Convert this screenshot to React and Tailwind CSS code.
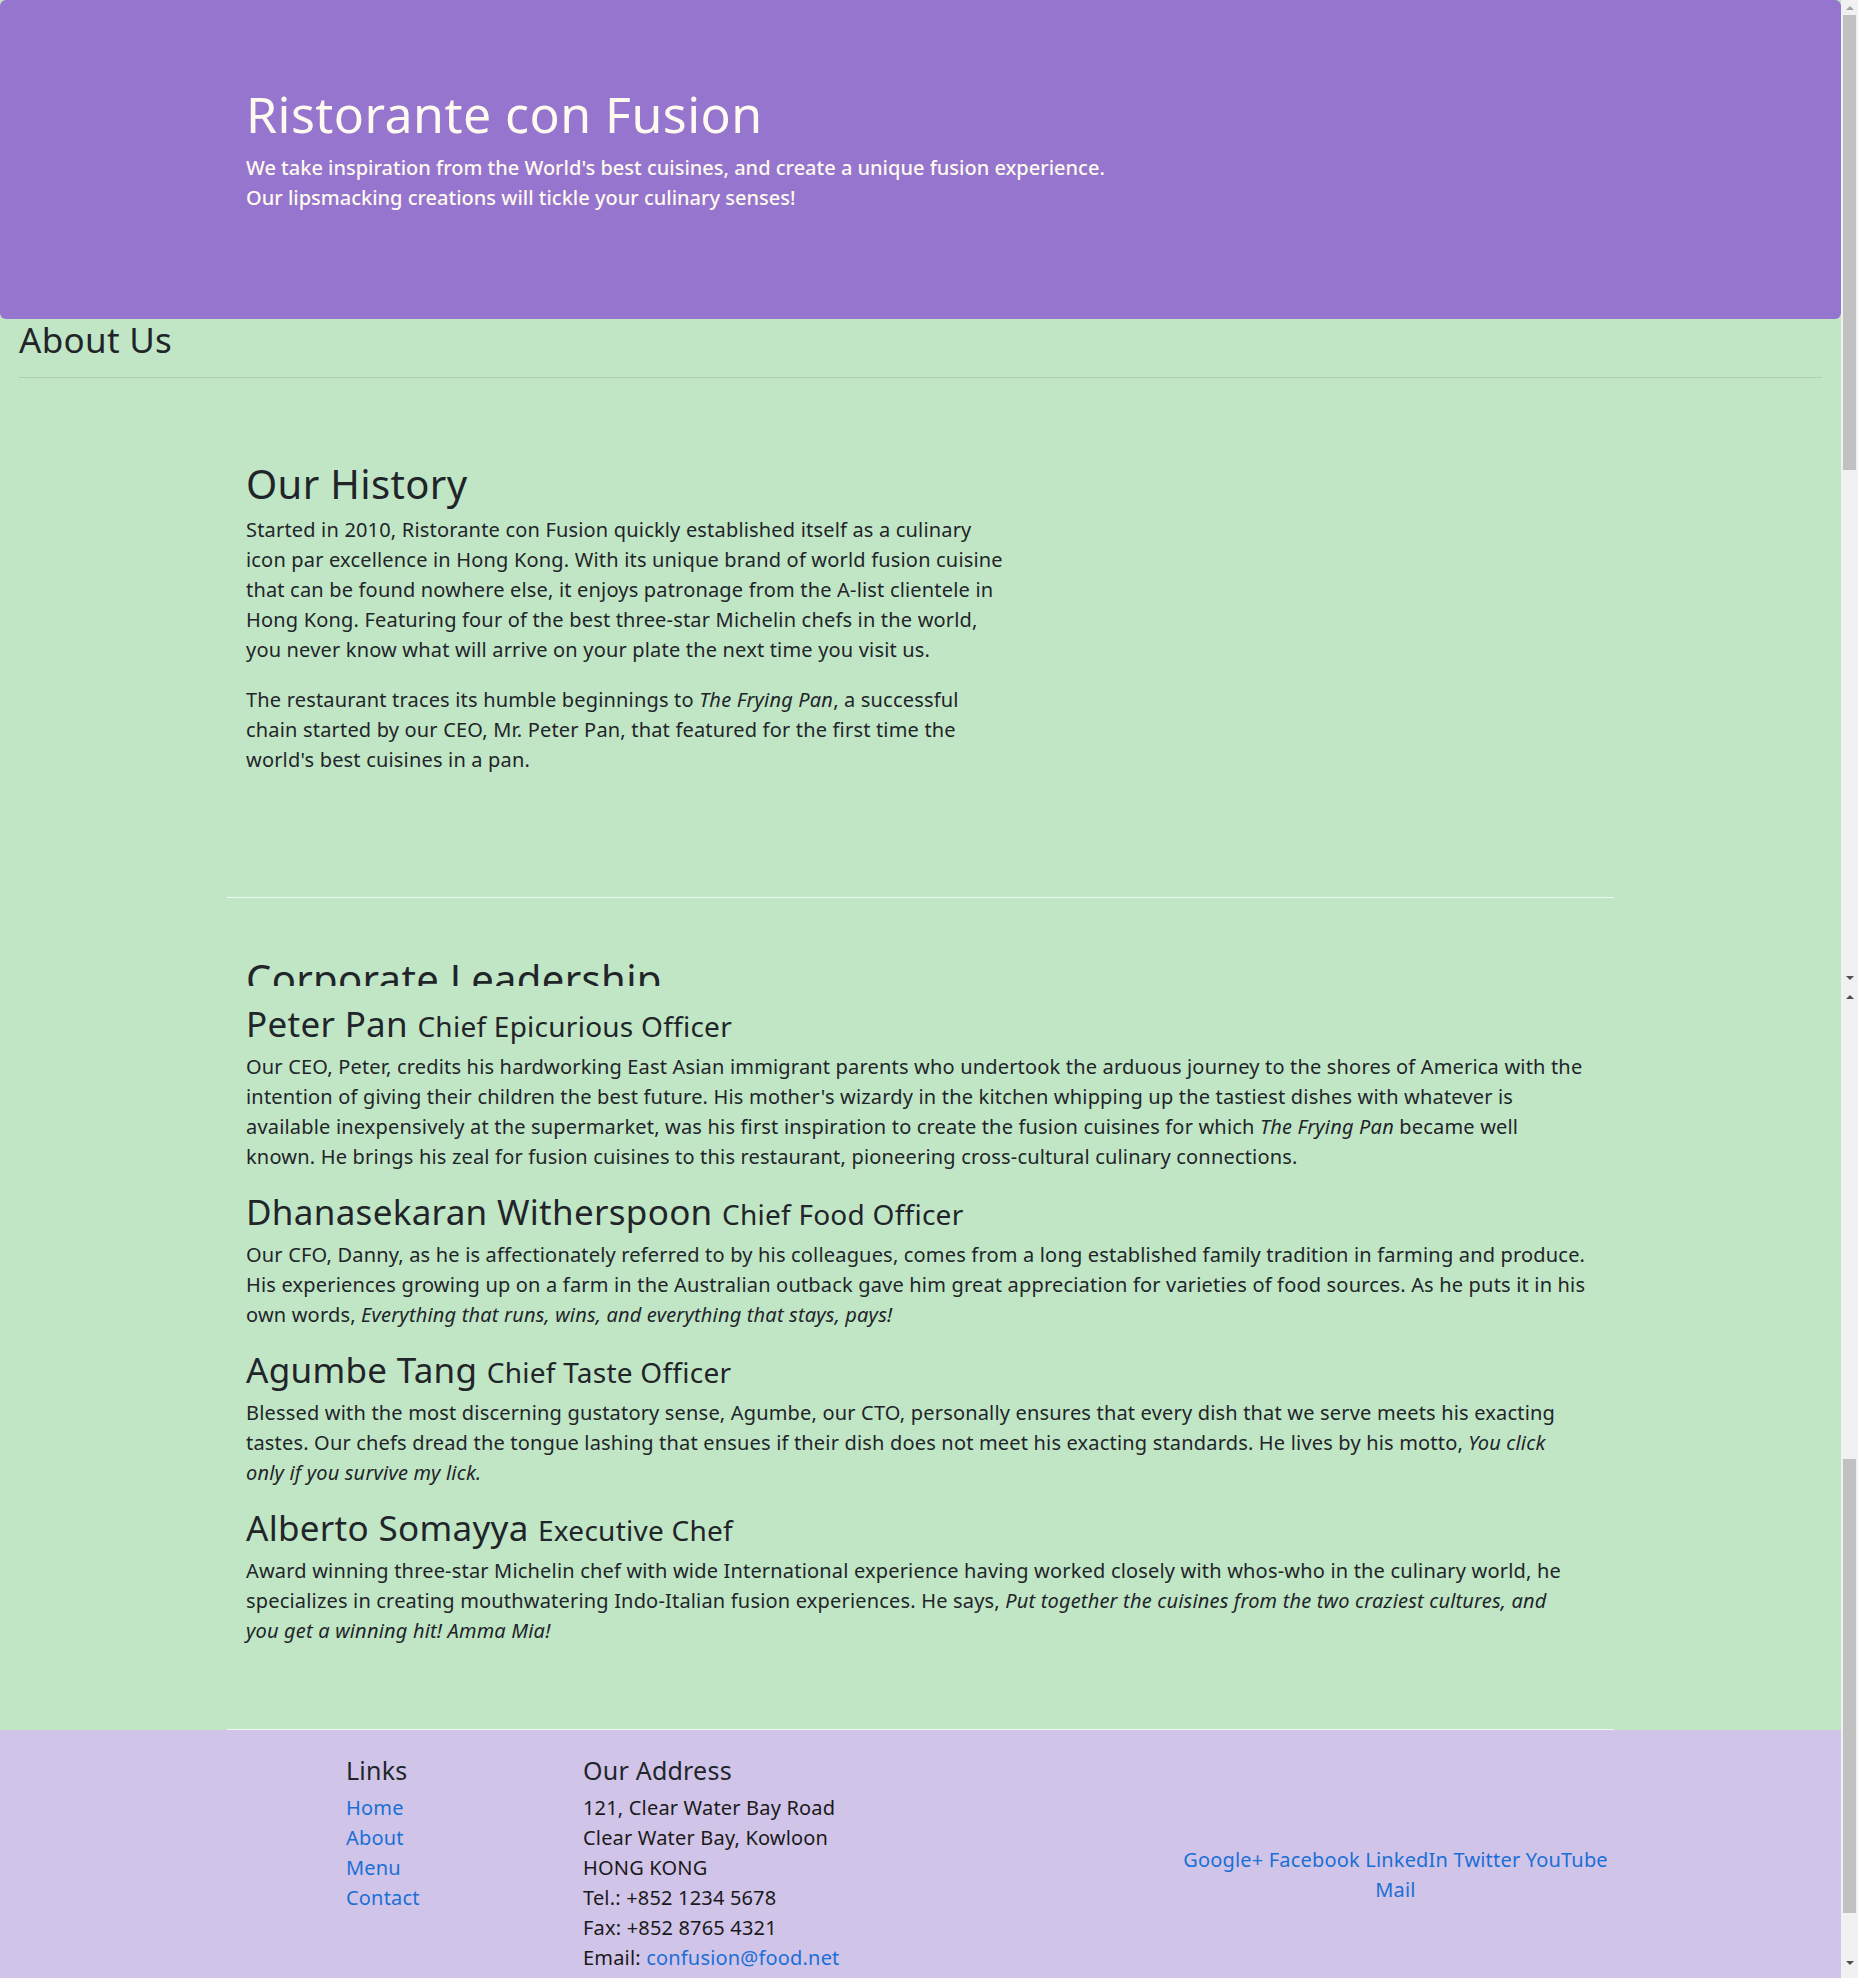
import React from 'react';

const history = [
  [
    'Started in 2010, Ristorante con Fusion quickly established itself as a culinary',
    'icon par excellence in Hong Kong. With its unique brand of world fusion cuisine',
    'that can be found nowhere else, it enjoys patronage from the A-list clientele in',
    'Hong Kong. Featuring four of the best three-star Michelin chefs in the world,',
    'you never know what will arrive on your plate the next time you visit us.',
  ],
  [
    <>The restaurant traces its humble beginnings to <em>The Frying Pan</em>, a successful</>,
    'chain started by our CEO, Mr. Peter Pan, that featured for the first time the',
    "world's best cuisines in a pan.",
  ],
];

const leaders = [
  {
    name: 'Peter Pan',
    title: 'Chief Epicurious Officer',
    lines: [
      'Our CEO, Peter, credits his hardworking East Asian immigrant parents who undertook the arduous journey to the shores of America with the',
      "intention of giving their children the best future. His mother's wizardy in the kitchen whipping up the tastiest dishes with whatever is",
      <>available inexpensively at the supermarket, was his first inspiration to create the fusion cuisines for which <em>The Frying Pan</em> became well</>,
      'known. He brings his zeal for fusion cuisines to this restaurant, pioneering cross-cultural culinary connections.',
    ],
  },
  {
    name: 'Dhanasekaran Witherspoon',
    title: 'Chief Food Officer',
    lines: [
      'Our CFO, Danny, as he is affectionately referred to by his colleagues, comes from a long established family tradition in farming and produce.',
      'His experiences growing up on a farm in the Australian outback gave him great appreciation for varieties of food sources. As he puts it in his',
      <>own words, <em>Everything that runs, wins, and everything that stays, pays!</em></>,
    ],
  },
  {
    name: 'Agumbe Tang',
    title: 'Chief Taste Officer',
    lines: [
      'Blessed with the most discerning gustatory sense, Agumbe, our CTO, personally ensures that every dish that we serve meets his exacting',
      <>tastes. Our chefs dread the tongue lashing that ensues if their dish does not meet his exacting standards. He lives by his motto, <em>You click</em></>,
      <em>only if you survive my lick.</em>,
    ],
  },
  {
    name: 'Alberto Somayya',
    title: 'Executive Chef',
    lines: [
      'Award winning three-star Michelin chef with wide International experience having worked closely with whos-who in the culinary world, he',
      <>specializes in creating mouthwatering Indo-Italian fusion experiences. He says, <em>Put together the cuisines from the two craziest cultures, and</em></>,
      <em>you get a winning hit! Amma Mia!</em>,
    ],
  },
];

const Lines = ({ lines, className = '' }) => (
  <p className={`whitespace-nowrap text-[20px] leading-[30px] tracking-[0.18px] ${className}`}>
    {lines.map((l, i) => (
      <React.Fragment key={i}>
        {i > 0 && <br />}
        {l}
      </React.Fragment>
    ))}
  </p>
);

const Arrow = ({ up, color }) => (
  <div
    className={`mx-auto h-0 w-0 border-x-[4px] border-x-transparent ${
      up ? 'border-b-[4px]' : 'border-t-[4px]'
    } ${color}`}
  />
);

function Scrollbar() {
  return (
    <div className="flex w-[17px] shrink-0 flex-col bg-[#f1f1f1]">
      <div className="flex h-[15px] items-center">
        <Arrow up color="border-b-[#a3a3a3]" />
      </div>
      <div className="mx-[2px] h-[455px] bg-[#c1c1c1]" />
      <div className="h-[506px]" />
      <Arrow color="border-t-[#505050]" />
      <div className="h-[15px]" />
      <Arrow up color="border-b-[#505050]" />
      <div className="h-[460px]" />
      <div className="mx-[2px] h-[454px] bg-[#c1c1c1]" />
      <div className="h-[48px]" />
      <Arrow color="border-t-[#505050]" />
    </div>
  );
}

export default function App() {
  const link = 'text-[#1a6fd6]';
  return (
    <div className="flex h-[1978px] overflow-hidden bg-[#c1e6c6] font-['Noto_Sans',sans-serif] text-[#212529]">
      <div className="w-[1841px] shrink-0">
        {/* Jumbotron */}
        <header className="h-[319px] rounded-[6px] bg-[#9575cd] pl-[246px] pt-[84px] text-[#fffaf0]">
          <h1 className="mb-[9px] text-[50px] leading-[60px] tracking-[0.45px]">Ristorante con Fusion</h1>
          <p className="text-[20px] font-medium leading-[30px]">
            We take inspiration from the World's best cuisines, and create a unique fusion experience.
            <br />
            Our lipsmacking creations will tickle your culinary senses!
          </p>
        </header>

        {/* Breadcrumb heading */}
        <div className="px-[19px]">
          <h3 className="text-[35px] leading-[42px] tracking-[0.3px]">About Us</h3>
          <hr className="mt-[16px] border-black/10" />
        </div>

        <div className="mx-auto w-[1387px]">
          {/* History */}
          <section className="mt-[20px] min-h-[500px] border-b border-[#eef7ef] px-[19px] pt-[62px]">
            <h2 className="mb-[7px] text-[40px] leading-[48px] tracking-[0.35px]">Our History</h2>
            <Lines lines={history[0]} className="mb-[20px]" />
            <Lines lines={history[1]} />
          </section>

          {/* Leadership */}
          <section className="border-b border-[#eef7ef] px-[19px] pb-[83px] pt-[57px]">
            <div className="h-[31px] overflow-hidden">
              <h2 className="text-[40px] leading-[48px] tracking-[0.35px]">Corporate Leadership</h2>
            </div>
            <div className="mt-[17px] flex flex-col gap-[19px]">
              {leaders.map((p) => (
                <div key={p.name}>
                  <h3 className="mb-[7px] h-[42px] text-[35px] leading-[42px] tracking-[0.3px]">
                    {p.name} <small className="text-[28px] leading-none tracking-[0.25px]">{p.title}</small>
                  </h3>
                  <Lines lines={p.lines} />
                </div>
              ))}
            </div>
          </section>
        </div>

        {/* Footer */}
        <footer className="h-full bg-[#d1c4e9] pt-[25px]">
          <div className="mx-auto flex w-[1425px] items-start">
            <div className="ml-[119px] w-[237px] px-[19px]">
              <h5 className="mb-[8px] text-[25px] leading-[30px] tracking-[0.22px]">Links</h5>
              <ul className={`text-[20px] leading-[30px] tracking-[0.18px] ${link}`}>
                <li><a href="#">Home</a></li>
                <li><a href="#">About</a></li>
                <li><a href="#">Menu</a></li>
                <li><a href="#">Contact</a></li>
              </ul>
            </div>
            <div className="w-[594px] px-[19px]">
              <h5 className="mb-[8px] text-[25px] leading-[30px] tracking-[0.22px]">Our Address</h5>
              <address className="text-[20px] not-italic leading-[30px] tracking-[0.18px] text-[#1a1a1a]">
                121, Clear Water Bay Road<br />
                Clear Water Bay, Kowloon<br />
                HONG KONG<br />
                Tel.: +852 1234 5678<br />
                Fax: +852 8765 4321<br />
                Email: <a href="#" className={link}>confusion@food.net</a>
              </address>
            </div>
            <div className={`w-[475px] px-[19px] pt-[90px] text-center text-[20px] leading-[30px] tracking-[0.18px] ${link}`}>
              <a href="#">Google+</a> <a href="#">Facebook</a> <a href="#">LinkedIn</a>{' '}
              <a href="#">Twitter</a> <a href="#">YouTube</a>
              <br />
              <a href="#">Mail</a>
            </div>
          </div>
        </footer>
      </div>
      <Scrollbar />
    </div>
  );
}
